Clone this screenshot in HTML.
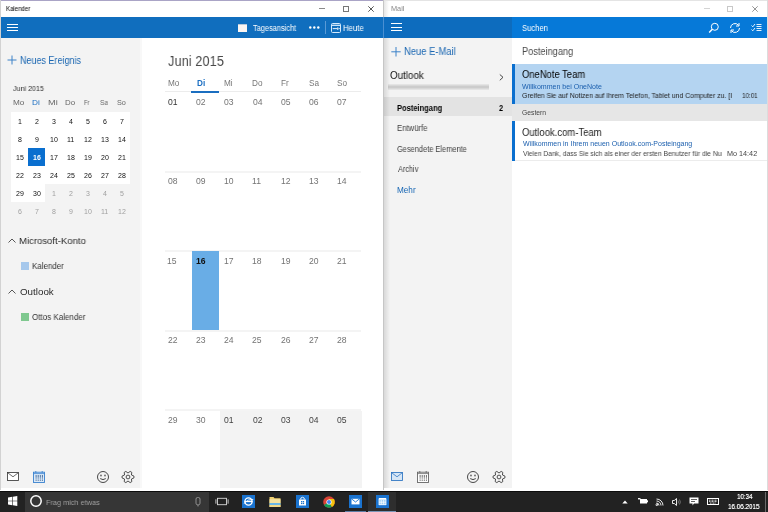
<!DOCTYPE html>
<html><head><meta charset="utf-8">
<style>
*{margin:0;padding:0;box-sizing:border-box}
html,body{width:768px;height:512px;overflow:hidden;background:#fff;font-family:"Liberation Sans",sans-serif;position:relative}
.a{position:absolute}
svg{position:absolute;overflow:visible}
.t{position:absolute;white-space:nowrap;line-height:1;transform-origin:0 0;will-change:transform}
</style></head><body>
<div class="a" style="left:0px;top:0px;width:384px;height:1px;background:#aaa4c6;"></div>
<div class="a" style="left:0px;top:0px;width:1px;height:490px;background:#d2d2d2;"></div>
<div class="a" style="left:1px;top:1px;width:382px;height:16px;background:#fff;"></div>
<div class="t" style="left:6.32px;top:6.00px;font-size:6.60px;color:#000;transform:scaleX(0.918);">Kalender</div>
<div class="a" style="left:319px;top:8px;width:6px;height:1px;background:#8a8a8a;"></div>
<div class="a" style="left:343px;top:6px;width:6px;height:6px;border:1px solid #777"></div>
<svg class="a" style="left:368px;top:6px" width="6" height="6" viewBox="0 0 6 6"><path d="M0.3 0.3L5.7 5.7M5.7 0.3L0.3 5.7" stroke="#444" stroke-width="0.9"/></svg>
<div class="a" style="left:1px;top:17px;width:382px;height:21px;background:#106ebe;"></div>
<div class="a" style="left:7px;top:24px;width:11px;height:1px;background:#fff;"></div>
<div class="a" style="left:7px;top:27px;width:11px;height:1px;background:#fff;"></div>
<div class="a" style="left:7px;top:30px;width:11px;height:1px;background:#fff;"></div>
<div class="a" style="left:238px;top:24px;width:9px;height:8px;background:#fbf5f2;"></div>
<div class="a" style="left:238px;top:24px;width:9px;height:1px;background:#b8c8d8;"></div>
<div class="t" style="left:252.65px;top:24.00px;font-size:8.40px;color:#fff;transform:scaleX(0.883);">Tagesansicht</div>
<svg class="a" style="left:309px;top:26px" width="11" height="3" viewBox="0 0 11 3"><circle cx="1.3" cy="1.5" r="1.2" fill="#fff"/><circle cx="5.3" cy="1.5" r="1.2" fill="#fff"/><circle cx="9.3" cy="1.5" r="1.2" fill="#fff"/></svg>
<div class="a" style="left:325px;top:21px;width:1px;height:13px;background:#5a9ad6;"></div>
<svg class="a" style="left:331px;top:23px" width="10" height="10" viewBox="0 0 10 10"><rect x="0.5" y="0.5" width="9" height="9" rx="1" fill="none" stroke="#d6eafc" stroke-width="1"/><path d="M0.5 2.3H9.5" stroke="#d6eafc" stroke-width="1.3"/><path d="M3 5.6H6.5M6.8 4.3V7" stroke="#fff" stroke-width="0.9"/><path d="M7.6 5.6H8.8" stroke="#fff" stroke-width="0.9"/><circle cx="2.3" cy="5.6" r="0.7" fill="#fff"/></svg>
<div class="t" style="left:343.18px;top:24.00px;font-size:8.40px;color:#fff;transform:scaleX(0.928);">Heute</div>
<div class="a" style="left:1px;top:38px;width:139px;height:450px;background:#f3f3f3;"></div>
<div class="a" style="left:140px;top:38px;width:2px;height:450px;background:#f8f8f8;"></div>
<svg class="a" style="left:7px;top:55px" width="10" height="10" viewBox="0 0 10 10"><path d="M5 0.5V9.5M0.5 5H9.5" stroke="#3c82c8" stroke-width="1"/></svg>
<div class="t" style="left:20.28px;top:56.00px;font-size:10.20px;color:#1b67b2;transform:scaleX(0.882);">Neues Ereignis</div>
<div class="t" style="left:13.23px;top:85.00px;font-size:8.00px;color:#333;transform:scaleX(0.889);">Juni 2015</div>
<div class="a" style="left:11px;top:112px;width:119px;height:72px;background:#fff;"></div>
<div class="a" style="left:11px;top:184px;width:34px;height:18px;background:#fff;"></div>
<div class="t" style="left:13.14px;top:99.00px;font-size:7.00px;color:#666;transform:scaleX(1.170);">Mo</div>
<div class="t" style="left:32.04px;top:99.00px;font-size:7.00px;color:#1b6ec2;transform:scaleX(1.179);">Di</div>
<div class="t" style="left:48.06px;top:99.00px;font-size:7.00px;color:#666;transform:scaleX(1.319);">Mi</div>
<div class="t" style="left:64.87px;top:99.00px;font-size:7.00px;color:#666;transform:scaleX(1.133);">Do</div>
<div class="t" style="left:84.23px;top:99.00px;font-size:7.00px;color:#666;transform:scaleX(0.840);">Fr</div>
<div class="t" style="left:100.17px;top:99.00px;font-size:7.00px;color:#666;transform:scaleX(0.944);">Sa</div>
<div class="t" style="left:116.84px;top:99.00px;font-size:7.00px;color:#666;transform:scaleX(1.040);">So</div>
<div class="a" style="left:28px;top:148px;width:17px;height:18px;background:#0a6fcf;"></div>
<div class="t" style="left:17.67px;top:118.00px;font-size:7.00px;color:#111;">1</div>
<div class="t" style="left:34.74px;top:118.00px;font-size:7.00px;color:#111;">2</div>
<div class="t" style="left:51.77px;top:118.00px;font-size:7.00px;color:#111;">3</div>
<div class="t" style="left:68.78px;top:118.00px;font-size:7.00px;color:#111;">4</div>
<div class="t" style="left:85.74px;top:118.00px;font-size:7.00px;color:#111;">5</div>
<div class="t" style="left:102.74px;top:118.00px;font-size:7.00px;color:#111;">6</div>
<div class="t" style="left:119.74px;top:118.00px;font-size:7.00px;color:#111;">7</div>
<div class="t" style="left:17.74px;top:136.00px;font-size:7.00px;color:#111;">8</div>
<div class="t" style="left:34.77px;top:136.00px;font-size:7.00px;color:#111;">9</div>
<div class="t" style="left:49.68px;top:136.00px;font-size:7.00px;color:#111;">10</div>
<div class="t" style="left:66.99px;top:136.00px;font-size:7.00px;color:#111;">11</div>
<div class="t" style="left:83.71px;top:136.00px;font-size:7.00px;color:#111;">12</div>
<div class="t" style="left:100.71px;top:136.00px;font-size:7.00px;color:#111;">13</div>
<div class="t" style="left:117.64px;top:136.00px;font-size:7.00px;color:#111;">14</div>
<div class="t" style="left:15.67px;top:154.00px;font-size:7.00px;color:#111;">15</div>
<div class="t" style="left:32.71px;top:154.00px;font-size:7.00px;color:#fff;font-weight:bold;">16</div>
<div class="t" style="left:49.71px;top:154.00px;font-size:7.00px;color:#111;">17</div>
<div class="t" style="left:66.68px;top:154.00px;font-size:7.00px;color:#111;">18</div>
<div class="t" style="left:83.71px;top:154.00px;font-size:7.00px;color:#111;">19</div>
<div class="t" style="left:100.75px;top:154.00px;font-size:7.00px;color:#111;">20</div>
<div class="t" style="left:117.78px;top:154.00px;font-size:7.00px;color:#111;">21</div>
<div class="t" style="left:15.78px;top:172.00px;font-size:7.00px;color:#111;">22</div>
<div class="t" style="left:32.78px;top:172.00px;font-size:7.00px;color:#111;">23</div>
<div class="t" style="left:49.71px;top:172.00px;font-size:7.00px;color:#111;">24</div>
<div class="t" style="left:66.75px;top:172.00px;font-size:7.00px;color:#111;">25</div>
<div class="t" style="left:83.78px;top:172.00px;font-size:7.00px;color:#111;">26</div>
<div class="t" style="left:100.78px;top:172.00px;font-size:7.00px;color:#111;">27</div>
<div class="t" style="left:117.75px;top:172.00px;font-size:7.00px;color:#111;">28</div>
<div class="t" style="left:15.78px;top:190.00px;font-size:7.00px;color:#111;">29</div>
<div class="t" style="left:32.78px;top:190.00px;font-size:7.00px;color:#111;">30</div>
<div class="t" style="left:51.67px;top:190.00px;font-size:7.00px;color:#a0a0a0;">1</div>
<div class="t" style="left:68.74px;top:190.00px;font-size:7.00px;color:#a0a0a0;">2</div>
<div class="t" style="left:85.78px;top:190.00px;font-size:7.00px;color:#a0a0a0;">3</div>
<div class="t" style="left:102.78px;top:190.00px;font-size:7.00px;color:#a0a0a0;">4</div>
<div class="t" style="left:119.74px;top:190.00px;font-size:7.00px;color:#a0a0a0;">5</div>
<div class="t" style="left:17.74px;top:208.00px;font-size:7.00px;color:#a0a0a0;">6</div>
<div class="t" style="left:34.74px;top:208.00px;font-size:7.00px;color:#a0a0a0;">7</div>
<div class="t" style="left:51.74px;top:208.00px;font-size:7.00px;color:#a0a0a0;">8</div>
<div class="t" style="left:68.78px;top:208.00px;font-size:7.00px;color:#a0a0a0;">9</div>
<div class="t" style="left:83.68px;top:208.00px;font-size:7.00px;color:#a0a0a0;">10</div>
<div class="t" style="left:100.99px;top:208.00px;font-size:7.00px;color:#a0a0a0;">11</div>
<div class="t" style="left:117.71px;top:208.00px;font-size:7.00px;color:#a0a0a0;">12</div>
<svg class="a" style="left:8px;top:238px" width="8" height="5" viewBox="0 0 8 5"><path d="M0.5 4.5L4 1L7.5 4.5" fill="none" stroke="#444" stroke-width="0.9"/></svg>
<div class="t" style="left:19.34px;top:236.00px;font-size:9.80px;color:#2a2a2a;transform:scaleX(0.974);">Microsoft-Konto</div>
<div class="a" style="left:21px;top:262px;width:8px;height:8px;background:#a6c8ec;"></div>
<div class="t" style="left:32.16px;top:262.00px;font-size:8.60px;color:#333;transform:scaleX(0.925);">Kalender</div>
<svg class="a" style="left:8px;top:289px" width="8" height="5" viewBox="0 0 8 5"><path d="M0.5 4.5L4 1L7.5 4.5" fill="none" stroke="#444" stroke-width="0.9"/></svg>
<div class="t" style="left:19.71px;top:287.00px;font-size:9.80px;color:#2a2a2a;transform:scaleX(0.987);">Outlook</div>
<div class="a" style="left:21px;top:313px;width:8px;height:8px;background:#7fc88f;"></div>
<div class="t" style="left:32.48px;top:313.00px;font-size:8.60px;color:#333;transform:scaleX(0.933);">Ottos Kalender</div>
<div class="a" style="left:142px;top:38px;width:241px;height:452px;background:#fff;"></div>
<div class="t" style="left:167.57px;top:54.00px;font-size:14.80px;color:#4a4a4a;transform:scaleX(0.871);">Juni 2015</div>
<div class="a" style="left:165px;top:91px;width:196px;height:1px;background:#ececec;"></div>
<div class="a" style="left:191px;top:91px;width:28px;height:2px;background:#1a6ec0;"></div>
<div class="t" style="left:167.84px;top:80.00px;font-size:8.20px;color:#777;">Mo</div>
<div class="t" style="left:196.61px;top:80.00px;font-size:8.20px;color:#1b6ec2;font-weight:bold;">Di</div>
<div class="t" style="left:224.14px;top:80.00px;font-size:8.20px;color:#777;">Mi</div>
<div class="t" style="left:252.34px;top:80.00px;font-size:8.20px;color:#777;">Do</div>
<div class="t" style="left:280.84px;top:80.00px;font-size:8.20px;color:#777;">Fr</div>
<div class="t" style="left:308.59px;top:80.00px;font-size:8.20px;color:#777;">Sa</div>
<div class="t" style="left:337.09px;top:80.00px;font-size:8.20px;color:#777;">So</div>
<div class="a" style="left:165px;top:171px;width:196px;height:2px;background:#f4f4f4;"></div>
<div class="a" style="left:165px;top:250px;width:196px;height:2px;background:#f4f4f4;"></div>
<div class="a" style="left:165px;top:330px;width:196px;height:2px;background:#f4f4f4;"></div>
<div class="a" style="left:165px;top:409px;width:196px;height:2px;background:#f4f4f4;"></div>
<div class="a" style="left:192px;top:251px;width:27px;height:79px;background:#69ade6;"></div>
<div class="a" style="left:220px;top:411px;width:142px;height:79px;background:#f3f3f3;"></div>
<div class="t" style="left:167.66px;top:98.00px;font-size:8.60px;color:#333;">01</div>
<div class="t" style="left:195.96px;top:98.00px;font-size:8.60px;color:#747474;">02</div>
<div class="t" style="left:224.26px;top:98.00px;font-size:8.60px;color:#747474;">03</div>
<div class="t" style="left:252.56px;top:98.00px;font-size:8.60px;color:#747474;">04</div>
<div class="t" style="left:280.86px;top:98.00px;font-size:8.60px;color:#747474;">05</div>
<div class="t" style="left:309.16px;top:98.00px;font-size:8.60px;color:#747474;">06</div>
<div class="t" style="left:337.46px;top:98.00px;font-size:8.60px;color:#747474;">07</div>
<div class="t" style="left:167.66px;top:177.00px;font-size:8.60px;color:#747474;">08</div>
<div class="t" style="left:195.96px;top:177.00px;font-size:8.60px;color:#747474;">09</div>
<div class="t" style="left:224.00px;top:177.00px;font-size:8.60px;color:#747474;">10</div>
<div class="t" style="left:252.30px;top:177.00px;font-size:8.60px;color:#747474;">11</div>
<div class="t" style="left:280.60px;top:177.00px;font-size:8.60px;color:#747474;">12</div>
<div class="t" style="left:308.90px;top:177.00px;font-size:8.60px;color:#747474;">13</div>
<div class="t" style="left:337.20px;top:177.00px;font-size:8.60px;color:#747474;">14</div>
<div class="t" style="left:167.40px;top:257.00px;font-size:8.60px;color:#747474;">15</div>
<div class="t" style="left:195.78px;top:257.00px;font-size:8.60px;color:#111;font-weight:bold;">16</div>
<div class="t" style="left:224.00px;top:257.00px;font-size:8.60px;color:#747474;">17</div>
<div class="t" style="left:252.30px;top:257.00px;font-size:8.60px;color:#747474;">18</div>
<div class="t" style="left:280.60px;top:257.00px;font-size:8.60px;color:#747474;">19</div>
<div class="t" style="left:309.07px;top:257.00px;font-size:8.60px;color:#747474;">20</div>
<div class="t" style="left:337.37px;top:257.00px;font-size:8.60px;color:#747474;">21</div>
<div class="t" style="left:167.57px;top:336.00px;font-size:8.60px;color:#747474;">22</div>
<div class="t" style="left:195.87px;top:336.00px;font-size:8.60px;color:#747474;">23</div>
<div class="t" style="left:224.17px;top:336.00px;font-size:8.60px;color:#747474;">24</div>
<div class="t" style="left:252.47px;top:336.00px;font-size:8.60px;color:#747474;">25</div>
<div class="t" style="left:280.77px;top:336.00px;font-size:8.60px;color:#747474;">26</div>
<div class="t" style="left:309.07px;top:336.00px;font-size:8.60px;color:#747474;">27</div>
<div class="t" style="left:337.37px;top:336.00px;font-size:8.60px;color:#747474;">28</div>
<div class="t" style="left:167.57px;top:416.00px;font-size:8.60px;color:#747474;">29</div>
<div class="t" style="left:195.96px;top:416.00px;font-size:8.60px;color:#747474;">30</div>
<div class="t" style="left:224.26px;top:416.00px;font-size:8.60px;color:#444;">01</div>
<div class="t" style="left:252.56px;top:416.00px;font-size:8.60px;color:#444;">02</div>
<div class="t" style="left:280.86px;top:416.00px;font-size:8.60px;color:#444;">03</div>
<div class="t" style="left:309.16px;top:416.00px;font-size:8.60px;color:#444;">04</div>
<div class="t" style="left:337.46px;top:416.00px;font-size:8.60px;color:#444;">05</div>
<div class="a" style="left:383px;top:0px;width:1px;height:490px;background:#c6c6c6;"></div>
<div class="a" style="left:383px;top:17px;width:1px;height:21px;background:#4a8fd2;"></div>
<div class="a" style="left:384px;top:0px;width:383px;height:1px;background:#e4e4e4;"></div>
<div class="a" style="left:384px;top:1px;width:383px;height:16px;background:#fff;"></div>
<div class="t" style="left:390.61px;top:6.00px;font-size:6.50px;color:#888;transform:scaleX(1.129);">Mail</div>
<div class="a" style="left:704px;top:8px;width:6px;height:1px;background:#d4d4d4;"></div>
<div class="a" style="left:727px;top:6px;width:6px;height:6px;border:1px solid #c8c8c8"></div>
<svg class="a" style="left:752px;top:6px" width="6" height="6" viewBox="0 0 6 6"><path d="M0.3 0.3L5.7 5.7M5.7 0.3L0.3 5.7" stroke="#8a8a8a" stroke-width="0.9"/></svg>
<div class="a" style="left:384px;top:17px;width:128px;height:21px;background:#0d6cbe;"></div>
<div class="a" style="left:512px;top:17px;width:255px;height:21px;background:#0679d8;"></div>
<div class="a" style="left:391px;top:23px;width:11px;height:1px;background:#fff;"></div>
<div class="a" style="left:391px;top:27px;width:11px;height:1px;background:#fff;"></div>
<div class="a" style="left:391px;top:30px;width:11px;height:1px;background:#fff;"></div>
<div class="t" style="left:522.22px;top:24.00px;font-size:9.00px;color:#fff;transform:scaleX(0.850);">Suchen</div>
<svg class="a" style="left:708px;top:21px" width="12" height="12" viewBox="0 0 12 12"><circle cx="6.8" cy="5.8" r="3.5" fill="none" stroke="#fff" stroke-width="1"/><path d="M4.3 8.3L1.2 11.6" stroke="#fff" stroke-width="1.4"/></svg>
<svg class="a" style="left:729px;top:22px" width="12" height="12" viewBox="0 0 12 12"><path d="M1.5 6A4.5 4.5 0 0 1 9.5 3.2M10.5 6A4.5 4.5 0 0 1 2.5 8.8" fill="none" stroke="#fff" stroke-width="1"/><path d="M10 1V4H7M2 11V8H5" fill="none" stroke="#fff" stroke-width="1"/></svg>
<svg class="a" style="left:751px;top:23px" width="11" height="10" viewBox="0 0 11 10"><path d="M0.5 2.5L1.8 3.8L4 1M0.5 6.5L1.8 7.8L4 5" fill="none" stroke="#fff" stroke-width="0.9"/><path d="M5.5 1.5H10.5M5.5 3.5H10.5M5.5 5.5H10.5M5.5 7.5H10.5" stroke="#fff" stroke-width="0.9"/></svg>
<div class="a" style="left:384px;top:38px;width:128px;height:450px;background:#f3f3f3;"></div>
<div class="a" style="left:384px;top:1px;width:5px;height:16px;background:linear-gradient(to right,#e6e6e6,#fff)"></div>
<svg class="a" style="left:391px;top:47px" width="10" height="10" viewBox="0 0 10 10"><path d="M5 0V9.5M0.3 4.8H9.7" stroke="#3c82c8" stroke-width="1"/></svg>
<div class="t" style="left:404.25px;top:47.00px;font-size:10.00px;color:#1b67b2;transform:scaleX(0.940);">Neue E-Mail</div>
<div class="t" style="left:390.31px;top:71.00px;font-size:10.00px;color:#111;transform:scaleX(0.979);">Outlook</div>
<svg class="a" style="left:499px;top:74px" width="5" height="7" viewBox="0 0 5 7"><path d="M0.8 0.5L4 3.3L0.8 6.3" fill="none" stroke="#333" stroke-width="0.9"/></svg>
<div class="a" style="left:388px;top:84px;width:101px;height:6px;background:linear-gradient(#eaeaea,#c6c6c6 50%,#eaeaea);filter:blur(0.5px)"></div>
<div class="a" style="left:384px;top:97px;width:128px;height:19px;background:#e3e3e3;"></div>
<div class="t" style="left:397.25px;top:105.00px;font-size:8.20px;color:#000;font-weight:bold;transform:scaleX(0.919);">Posteingang</div>
<div class="t" style="left:498.78px;top:105.00px;font-size:8.20px;color:#000;font-weight:bold;transform:scaleX(0.896);">2</div>
<div class="t" style="left:397.08px;top:125.00px;font-size:8.20px;color:#404040;transform:scaleX(0.945);">Entwürfe</div>
<div class="t" style="left:397.33px;top:146.00px;font-size:8.20px;color:#404040;transform:scaleX(0.909);">Gesendete Elemente</div>
<div class="t" style="left:397.70px;top:166.00px;font-size:8.20px;color:#404040;transform:scaleX(0.891);">Archiv</div>
<div class="t" style="left:396.86px;top:187.00px;font-size:8.20px;color:#1766b4;transform:scaleX(0.974);">Mehr</div>
<div class="a" style="left:384px;top:38px;width:6px;height:450px;background:linear-gradient(to right,rgba(0,0,0,0.11),rgba(0,0,0,0))"></div>
<div class="a" style="left:512px;top:38px;width:255px;height:450px;background:#fff;"></div>
<div class="t" style="left:521.66px;top:47.00px;font-size:10.00px;color:#4a4a4a;transform:scaleX(0.921);">Posteingang</div>
<div class="a" style="left:512px;top:64px;width:255px;height:40px;background:#b4d4f1;"></div>
<div class="a" style="left:512px;top:64px;width:3px;height:40px;background:#0a6fcf;"></div>
<div class="t" style="left:522.02px;top:70.00px;font-size:10.00px;color:#000;transform:scaleX(0.942);">OneNote Team</div>
<div class="t" style="left:522.40px;top:83.00px;font-size:7.00px;color:#1b5fae;transform:scaleX(1.007);">Willkommen bei OneNote</div>
<div class="t" style="left:522.06px;top:92.00px;font-size:7.00px;color:#222;transform:scaleX(0.981);">Greifen Sie auf Notizen auf Ihrem Telefon, Tablet und Computer zu. [I</div>
<div class="t" style="left:741.56px;top:92.00px;font-size:7.00px;color:#222;transform:scaleX(0.897);">10:01</div>
<div class="a" style="left:512px;top:104px;width:255px;height:17px;background:#e6e6e6;"></div>
<div class="t" style="left:522.46px;top:110.00px;font-size:6.50px;color:#444;transform:scaleX(1.042);">Gestern</div>
<div class="a" style="left:512px;top:121px;width:3px;height:40px;background:#0a6fcf;"></div>
<div class="a" style="left:515px;top:160px;width:252px;height:1px;background:#ececec;"></div>
<div class="t" style="left:522.42px;top:128.00px;font-size:10.00px;color:#222;transform:scaleX(0.949);">Outlook.com-Team</div>
<div class="t" style="left:522.80px;top:140.00px;font-size:7.00px;color:#1b5fae;">Willkommen in Ihrem neuen Outlook.com-Posteingang</div>
<div class="t" style="left:522.80px;top:150.00px;font-size:7.00px;color:#444;transform:scaleX(0.959);">Vielen Dank, dass Sie sich als einer der ersten Benutzer für die Nu</div>
<div class="t" style="left:727.12px;top:150.00px;font-size:7.00px;color:#444;transform:scaleX(1.033);">Mo 14:42</div>
<div class="a" style="left:767px;top:0px;width:1px;height:490px;background:#dcdcdc;"></div>
<svg class="a" style="left:7px;top:472px" width="12" height="9" viewBox="0 0 12 9"><rect x="0.5" y="0.5" width="11" height="8" fill="#fff" stroke="#3a3a3a" stroke-width="0.85"/><path d="M0.8 0.8L6 4.8L11.2 0.8" fill="none" stroke="#3a3a3a" stroke-width="0.75"/></svg>
<svg class="a" style="left:33px;top:471px" width="12" height="12" viewBox="0 0 12 12"><rect x="0.5" y="1.2" width="11" height="10.3" fill="#dceaf8" stroke="#3a82cf" stroke-width="0.9"/><path d="M0.5 2.6H11.5" stroke="#3a82cf" stroke-width="0.8"/><path d="M2.8 0V1.8M9.2 0V1.8" stroke="#3a82cf" stroke-width="0.9"/><rect x="2.6" y="4.2" width="1" height="1.6" fill="#27538a"/><rect x="2.6" y="6.4" width="1" height="1.1" fill="#27538a"/><rect x="2.6" y="8.6" width="1" height="1.1" fill="#27538a"/><rect x="4.7" y="4.2" width="1" height="1.6" fill="#27538a"/><rect x="4.7" y="6.4" width="1" height="1.1" fill="#27538a"/><rect x="4.7" y="8.6" width="1" height="1.1" fill="#27538a"/><rect x="6.8" y="4.2" width="1" height="1.6" fill="#27538a"/><rect x="6.8" y="6.4" width="1" height="1.1" fill="#27538a"/><rect x="6.8" y="8.6" width="1" height="1.1" fill="#27538a"/><rect x="8.9" y="4.2" width="1" height="1.6" fill="#27538a"/><rect x="8.9" y="6.4" width="1" height="1.1" fill="#27538a"/><rect x="8.9" y="8.6" width="1" height="1.1" fill="#27538a"/></svg>
<svg class="a" style="left:97px;top:471px" width="12" height="12" viewBox="0 0 12 12"><circle cx="6" cy="6" r="5.5" fill="none" stroke="#333" stroke-width="0.9"/><ellipse cx="4" cy="4.6" rx="0.65" ry="1" fill="#333"/><ellipse cx="8" cy="4.6" rx="0.65" ry="1" fill="#333"/><path d="M3.2 7.6Q6 9.6 8.8 7.6" fill="none" stroke="#333" stroke-width="0.9"/></svg>
<svg class="a" style="left:122px;top:470.5px" width="12" height="12" viewBox="0 0 12 12"><polygon points="9.46,4.00 11.93,5.06 11.93,6.94 9.46,8.00 9.78,10.66 8.15,11.60 6.00,10.00 3.85,11.60 2.22,10.66 2.54,8.00 0.07,6.94 0.07,5.06 2.54,4.00 2.22,1.34 3.85,0.40 6.00,2.00 8.15,0.40 9.78,1.34" fill="none" stroke="#333" stroke-width="0.85" stroke-linejoin="round"/><circle cx="6" cy="6" r="1.9" fill="none" stroke="#333" stroke-width="0.85"/></svg>
<svg class="a" style="left:391px;top:472px" width="12" height="9" viewBox="0 0 12 9"><rect x="0.5" y="0.5" width="11" height="8" fill="#d6e6f6" stroke="#2a72c0" stroke-width="0.85"/><path d="M0.8 0.8L6 4.8L11.2 0.8" fill="none" stroke="#2a72c0" stroke-width="0.75"/></svg>
<svg class="a" style="left:417px;top:471px" width="12" height="12" viewBox="0 0 12 12"><rect x="0.5" y="1.2" width="11" height="10.3" fill="#fff" stroke="#666" stroke-width="0.9"/><path d="M0.5 2.6H11.5" stroke="#666" stroke-width="0.8"/><path d="M2.8 0V1.8M9.2 0V1.8" stroke="#666" stroke-width="0.9"/><rect x="2.6" y="4.2" width="1" height="1.6" fill="#444"/><rect x="2.6" y="6.4" width="1" height="1.1" fill="#444"/><rect x="2.6" y="8.6" width="1" height="1.1" fill="#444"/><rect x="4.7" y="4.2" width="1" height="1.6" fill="#444"/><rect x="4.7" y="6.4" width="1" height="1.1" fill="#444"/><rect x="4.7" y="8.6" width="1" height="1.1" fill="#444"/><rect x="6.8" y="4.2" width="1" height="1.6" fill="#444"/><rect x="6.8" y="6.4" width="1" height="1.1" fill="#444"/><rect x="6.8" y="8.6" width="1" height="1.1" fill="#444"/><rect x="8.9" y="4.2" width="1" height="1.6" fill="#444"/><rect x="8.9" y="6.4" width="1" height="1.1" fill="#444"/><rect x="8.9" y="8.6" width="1" height="1.1" fill="#444"/></svg>
<svg class="a" style="left:467px;top:471px" width="12" height="12" viewBox="0 0 12 12"><circle cx="6" cy="6" r="5.5" fill="none" stroke="#333" stroke-width="0.9"/><ellipse cx="4" cy="4.6" rx="0.65" ry="1" fill="#333"/><ellipse cx="8" cy="4.6" rx="0.65" ry="1" fill="#333"/><path d="M3.2 7.6Q6 9.6 8.8 7.6" fill="none" stroke="#333" stroke-width="0.9"/></svg>
<svg class="a" style="left:493px;top:470.5px" width="12" height="12" viewBox="0 0 12 12"><polygon points="9.46,4.00 11.93,5.06 11.93,6.94 9.46,8.00 9.78,10.66 8.15,11.60 6.00,10.00 3.85,11.60 2.22,10.66 2.54,8.00 0.07,6.94 0.07,5.06 2.54,4.00 2.22,1.34 3.85,0.40 6.00,2.00 8.15,0.40 9.78,1.34" fill="none" stroke="#333" stroke-width="0.85" stroke-linejoin="round"/><circle cx="6" cy="6" r="1.9" fill="none" stroke="#333" stroke-width="0.85"/></svg>
<div class="a" style="left:1px;top:488px;width:382px;height:3px;background:#fff;"></div>
<div class="a" style="left:384px;top:488px;width:383px;height:3px;background:#fff;"></div>
<div class="a" style="left:0px;top:491px;width:768px;height:21px;background:#222222;"></div>
<div class="a" style="left:25px;top:491px;width:184px;height:21px;background:#363636;"></div>
<div class="a" style="left:0px;top:491px;width:768px;height:1px;background:#0c0c0c;"></div>
<svg class="a" style="left:8px;top:496px" width="10" height="10" viewBox="0 0 10 10"><path d="M0 1.4L4.3 0.8V4.7H0Z M4.9 0.7L9.3 0V4.7H4.9Z M0 5.3H4.3V9.2L0 8.6Z M4.9 5.3H9.3V10L4.9 9.3Z" fill="#fff"/></svg>
<svg class="a" style="left:30px;top:495px" width="12" height="12" viewBox="0 0 12 12"><circle cx="6" cy="6" r="5.2" fill="none" stroke="#fff" stroke-width="1.5"/></svg>
<div class="t" style="left:46.41px;top:499.00px;font-size:8.00px;color:#a0a0a0;transform:scaleX(0.916);">Frag mich etwas</div>
<svg class="a" style="left:195px;top:497px" width="6" height="10" viewBox="0 0 6 10"><rect x="1" y="0.5" width="4" height="7.3" rx="1.6" fill="none" stroke="#9a9a9a" stroke-width="0.9"/><path d="M3 7.8V9.5" stroke="#9a9a9a" stroke-width="0.9"/></svg>
<svg class="a" style="left:215px;top:497px" width="14" height="9" viewBox="0 0 14 9"><rect x="2.5" y="1.3" width="9" height="6.4" fill="none" stroke="#d8d8d8" stroke-width="0.9"/><path d="M0.9 2.3V6.7M13.1 2.3V6.7" stroke="#d8d8d8" stroke-width="0.9"/></svg>
<div class="a" style="left:242px;top:495px;width:13px;height:13px;background:#1a73cf;"></div>
<svg class="a" style="left:242px;top:495px" width="13" height="13" viewBox="0 0 13 13"><circle cx="6.5" cy="6.5" r="3.6" fill="none" stroke="#fff" stroke-width="1.4"/><path d="M2.6 6.5H10.4" stroke="#fff" stroke-width="1.2"/><path d="M1.8 8.5Q6.5 3.5 11.2 4.5" fill="none" stroke="#fff" stroke-width="0.9"/></svg>
<svg class="a" style="left:269px;top:496px" width="12" height="11" viewBox="0 0 12 11"><path d="M0.5 1H4.5L5.5 2.2H11.5V11H0.5Z" fill="#f0d070"/><rect x="0.5" y="3.2" width="11" height="3.8" fill="#f6e3a0"/><rect x="0.5" y="7" width="11" height="2" fill="#69b7e8"/><rect x="0.5" y="9" width="11" height="2" fill="#f3d98a"/></svg>
<div class="a" style="left:296px;top:495px;width:13px;height:13px;background:#1a73cf;"></div>
<svg class="a" style="left:296px;top:495px" width="13" height="13" viewBox="0 0 13 13"><path d="M3 4.5H10V10.5H3Z" fill="#fff"/><path d="M4.8 4.5V3Q6.5 1.5 8.2 3V4.5" fill="none" stroke="#fff" stroke-width="0.9"/><rect x="5" y="6" width="1.3" height="1.3" fill="#1a73cf"/><rect x="6.8" y="6" width="1.3" height="1.3" fill="#1a73cf"/><rect x="5" y="7.8" width="1.3" height="1.3" fill="#1a73cf"/><rect x="6.8" y="7.8" width="1.3" height="1.3" fill="#1a73cf"/></svg>
<svg class="a" style="left:323px;top:495.5px" width="12" height="12" viewBox="0 0 12 12"><circle cx="6" cy="6" r="5.8" fill="#db4437"/><path d="M6 6L0.98 8.9A5.8 5.8 0 0 0 8.9 11.02Z" fill="#0f9d58"/><path d="M6 6L8.9 11.02A5.8 5.8 0 0 0 11.02 3.1L6 3.1Z" fill="#f4c20d"/><circle cx="6" cy="6" r="2.6" fill="#fff"/><circle cx="6" cy="6" r="2" fill="#4285f4"/></svg>
<div class="a" style="left:349px;top:495px;width:13px;height:13px;background:#1a73cf;"></div>
<svg class="a" style="left:349px;top:495px" width="13" height="13" viewBox="0 0 13 13"><rect x="2.5" y="3.8" width="8" height="5.6" fill="#fff"/><path d="M2.6 3.9L6.5 7L10.4 3.9" fill="none" stroke="#1a73cf" stroke-width="0.9"/></svg>
<div class="a" style="left:345px;top:511px;width:21px;height:1px;background:#5d7ea6;"></div>
<div class="a" style="left:368px;top:492px;width:28px;height:20px;background:#2e2e2e;"></div>
<div class="a" style="left:376px;top:495px;width:13px;height:13px;background:#1a73cf;"></div>
<svg class="a" style="left:376px;top:495px" width="13" height="13" viewBox="0 0 13 13"><rect x="3" y="3" width="7" height="7" fill="#9fd0f6"/><rect x="3" y="3" width="7" height="1.6" fill="#fff"/><path d="M3 3.5V10M10 3.5V10M3 9.7H10" stroke="#fff" stroke-width="0.8"/><path d="M5.3 5V9.5M7.6 5V9.5M3 7.2H10" stroke="#fff" stroke-width="0.7"/></svg>
<div class="a" style="left:368px;top:511px;width:28px;height:1px;background:#7a96b8;"></div>
<svg class="a" style="left:622px;top:500px" width="6" height="4" viewBox="0 0 6 4"><path d="M0.3 3.5L3 0.5L5.7 3.5Z" fill="#fff"/></svg>
<svg class="a" style="left:638px;top:498px" width="10" height="6" viewBox="0 0 10 6"><rect x="2" y="1" width="7" height="4.5" fill="#fff"/><rect x="9" y="2.3" width="1" height="2" fill="#fff"/><path d="M0 0.5H2.5M1 0V2" stroke="#fff" stroke-width="0.9"/></svg>
<svg class="a" style="left:656px;top:498px" width="8" height="8" viewBox="0 0 8 8"><path d="M0.8 7.5A0.8 0.8 0 1 1 0.81 7.5" stroke="#fff"/><path d="M0.5 5A2.5 2.5 0 0 1 3 7.5M0.5 3A4.5 4.5 0 0 1 5 7.5M0.5 1A6.5 6.5 0 0 1 7 7.5" fill="none" stroke="#fff" stroke-width="0.9"/></svg>
<svg class="a" style="left:672px;top:498px" width="10" height="8" viewBox="0 0 10 8"><path d="M0.5 2.5H2.3L4.5 0.5V7.5L2.3 5.5H0.5Z" fill="none" stroke="#fff" stroke-width="0.9"/><path d="M6 2.5Q7 4 6 5.5M7.5 1.5Q9.2 4 7.5 6.5" fill="none" stroke="#777" stroke-width="0.9"/></svg>
<svg class="a" style="left:689px;top:497px" width="10" height="9" viewBox="0 0 10 9"><path d="M0.5 0.5H9.5V6.5H5L3.5 8.5V6.5H0.5Z" fill="#fff"/><path d="M2 2.5H8M2 4.5H6" stroke="#202020" stroke-width="0.7"/></svg>
<svg class="a" style="left:707px;top:498px" width="12" height="7" viewBox="0 0 12 7"><rect x="0.5" y="0.5" width="11" height="6" fill="none" stroke="#fff" stroke-width="1"/><path d="M2 2.2H10M2 3.6H10M3 5.1H9" stroke="#fff" stroke-width="0.8" stroke-dasharray="1 0.5"/></svg>
<div class="t" style="left:736.56px;top:493.00px;font-size:7.60px;color:#fff;transform:scaleX(0.819);text-shadow:0 0 0.4px #fff">10:34</div>
<div class="t" style="left:728.36px;top:503.00px;font-size:7.60px;color:#fff;transform:scaleX(0.830);text-shadow:0 0 0.4px #fff">16.06.2015</div>
<div class="a" style="left:765px;top:492px;width:1px;height:20px;background:#6a6a6a;"></div>
</body></html>
